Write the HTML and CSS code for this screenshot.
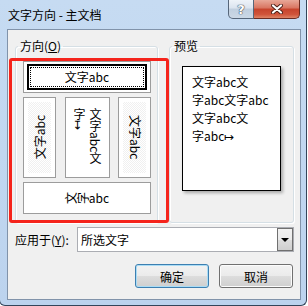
FILE: index.html
```html
<!DOCTYPE html>
<html lang="zh-CN">
<head>
    <meta charset="UTF-8">
    <title>文字方向 - 主文档</title>
    <link rel="stylesheet" href="styles.css">
</head>
<body>
    <div class="window">
        <div class="titlebar">
            <span class="title">文字方向 - 主文档</span>
            <div class="caption">
                <span class="cap help">?</span>
                <span class="cap close">
                    <svg width="12" height="10" viewBox="0 0 12 10">
                        <path d="M2 1.5 L10 8.5 M10 1.5 L2 8.5" stroke="#4a2018" stroke-width="4" stroke-linecap="round"/>
                        <path d="M2 1.5 L10 8.5 M10 1.5 L2 8.5" stroke="#fff" stroke-width="2.2" stroke-linecap="round"/>
                    </svg>
                </span>
            </div>
        </div>

        <div class="client">
            <div class="groups">
                <fieldset class="group">
                    <legend>方向(<u>O</u>)</legend>
                    <div class="group-body dir-body">
                        <div class="opt opt-h opt-selected">
                            <div class="focus">文字abc</div>
                        </div>
                        <div class="vrow">
                            <div class="opt v-side v-left"><span class="vtext">文字abc</span></div>
                            <div class="opt v-mid"><span class="vmid-text">文字abc文<br>字↦</span></div>
                            <div class="opt v-side v-right"><span class="vtext">文字abc</span></div>
                        </div>
                        <div class="opt opt-h">
                            <span><span class="rot">文</span><span class="rot">字</span>abc</span>
                        </div>
                    </div>
                </fieldset>

                <fieldset class="group preview-group">
                    <legend>预览</legend>
                    <div class="group-body preview-body">
                        <div class="preview">
                            <div>文字abc文</div>
                            <div>字abc文字abc</div>
                            <div>文字abc文</div>
                            <div>字abc↦</div>
                        </div>
                    </div>
                </fieldset>
            </div>

            <div class="apply">
                <span class="apply-label">应用于(<u>Y</u>):</span>
                <div class="combo">
                    <span class="combo-text">所选文字</span>
                    <span class="drop"><span class="arrow"></span></span>
                </div>
            </div>

            <div class="actions">
                <button class="btn btn-default">确定</button>
                <button class="btn">取消</button>
            </div>

            <div class="highlight"></div>
        </div>
    </div>
</body>
</html>
```

FILE: styles.css
```css
body {
    margin: 0;
    background: #fff;
    font-family: "Noto Sans CJK SC", "Noto Sans", sans-serif;
    font-size: 12px;
    color: #000;
    overflow: hidden;
}

.window {
    margin-left: -1px;
    width: 308px;
    height: 306px;
    box-sizing: border-box;
    border: 1px solid #34455a;
    border-top: none;
    border-radius: 0 0 6px 6px;
    background: linear-gradient(#c6dbf2, #bcd3ee);
    display: flex;
    flex-direction: column;
}

.titlebar {
    height: 29px;
    flex: none;
    display: flex;
    align-items: flex-start;
}

.title {
    margin: 7px 0 0 8px;
    line-height: 16px;
}

.caption {
    margin-left: auto;
    margin-right: 6px;
    display: flex;
}

.cap {
    height: 19px;
    box-sizing: border-box;
    border: 1px solid #56667a;
    border-top: none;
    display: flex;
    align-items: center;
    justify-content: center;
}

.help {
    width: 26px;
    border-radius: 0 0 0 5px;
    background: linear-gradient(#eef3f9, #dbe4ef 45%, #c0cfdf 50%, #cbd8e6);
    color: #fff;
    font-family: "DejaVu Sans", sans-serif;
    font-weight: bold;
    font-size: 13px;
    text-shadow: 0 0 1px #3a4656, 0 0 1px #3a4656, 0 0 1px #3a4656;
}

.close {
    width: 46px;
    border-left: none;
    border-color: #6b2c22;
    border-radius: 0 0 5px 0;
    background: linear-gradient(#e8a898, #d87460 45%, #c6432c 50%, #d0543a 80%, #de8466);
}

.client {
    position: relative;
    margin: 0 5px 0 7px;
    height: 271px;
    box-sizing: border-box;
    border: 1px solid #8193aa;
    background: #f0f0f0;
    padding: 9px 6px 11px 7px;
    display: flex;
    flex-direction: column;
}

.groups {
    display: flex;
    gap: 11px;
}

.group {
    margin: 0;
    padding: 0;
    min-width: 0;
    border: 1px solid #d5dfe5;
    border-radius: 3px;
    box-shadow: inset 1px 1px #fff, 1px 1px #fff;
}

.group legend {
    margin-left: 2px;
    padding: 0 2px;
    line-height: 14px;
}

.dir-body {
    width: 128px;
    padding: 8px 6px 8px 7px;
    display: flex;
    flex-direction: column;
    gap: 4px;
}

.opt {
    box-sizing: border-box;
    border: 1px solid #9c9c9c;
    background: #fff;
    display: flex;
    align-items: center;
    justify-content: center;
    line-height: 14px;
}

.opt-h {
    height: 32px;
}

.opt-selected {
    padding: 2px 3px;
    align-items: stretch;
}

.focus {
    flex: 1;
    border: 2px solid #000;
    outline: 1px dotted #000;
    outline-offset: -4px;
    display: flex;
    align-items: center;
    justify-content: center;
}

.vrow {
    height: 81px;
    display: flex;
    justify-content: space-between;
}

.v-side {
    width: 33px;
    background: repeating-conic-gradient(#f0f0f0 0 25%, #fff 0 50%) 0 0 / 2px 2px;
    box-shadow: inset 0 0 0 4px #fff;
}

.vtext {
    writing-mode: vertical-rl;
    text-orientation: sideways;
}

.v-left .vtext {
    transform: rotate(180deg);
}

.v-mid {
    width: 45px;
    align-items: flex-start;
}

.vmid-text {
    margin-top: 10px;
    writing-mode: vertical-rl;
    line-height: 16px;
}

.rot {
    display: inline-block;
    transform: rotate(-90deg);
}

.preview-group {
    flex: 1;
}

.preview-body {
    padding: 13px 0 0 12px;
}

.preview {
    width: 99px;
    height: 125px;
    box-sizing: border-box;
    border: 1px solid #000;
    background: #fff;
    box-shadow: 2px 2px 3px rgba(0, 0, 0, 0.3);
    padding: 6px 0 0 9px;
    line-height: 18px;
    white-space: nowrap;
}

.apply {
    margin-top: 4px;
    height: 25px;
    display: flex;
    align-items: center;
}

.combo {
    margin-left: auto;
    width: 217px;
    height: 25px;
    box-sizing: border-box;
    border: 1px solid #abadb3;
    background: #fff;
    display: flex;
}

.combo-text {
    flex: 1;
    padding-left: 3px;
    line-height: 23px;
}

.drop {
    width: 16px;
    box-sizing: border-box;
    border: 1px solid #707070;
    background: linear-gradient(#f2f2f2, #ebebeb 50%, #dddddd 50%, #cfcfcf);
    display: flex;
    align-items: center;
    justify-content: center;
}

.arrow {
    width: 0;
    height: 0;
    border-top: 4px solid #000;
    border-left: 4px solid transparent;
    border-right: 4px solid transparent;
}

.actions {
    margin-top: 12px;
    padding-right: 1px;
    display: flex;
    justify-content: flex-end;
    gap: 10px;
}

.btn {
    width: 74px;
    height: 24px;
    box-sizing: border-box;
    padding: 0;
    border: 1px solid #707070;
    border-radius: 3px;
    background: linear-gradient(#f2f2f2, #ebebeb 49%, #dddddd 50%, #cfcfcf);
    box-shadow: inset 0 0 0 1px #fcfcfc;
    font: inherit;
    color: #000;
}

.btn-default {
    border-color: #3c7fb1;
    box-shadow: inset 0 0 0 1px #aadcf5;
}

.highlight {
    position: absolute;
    left: 1px;
    top: 28px;
    width: 160px;
    height: 165px;
    box-sizing: border-box;
    border: 3px solid #f5241c;
    border-radius: 3px;
    pointer-events: none;
}
```
